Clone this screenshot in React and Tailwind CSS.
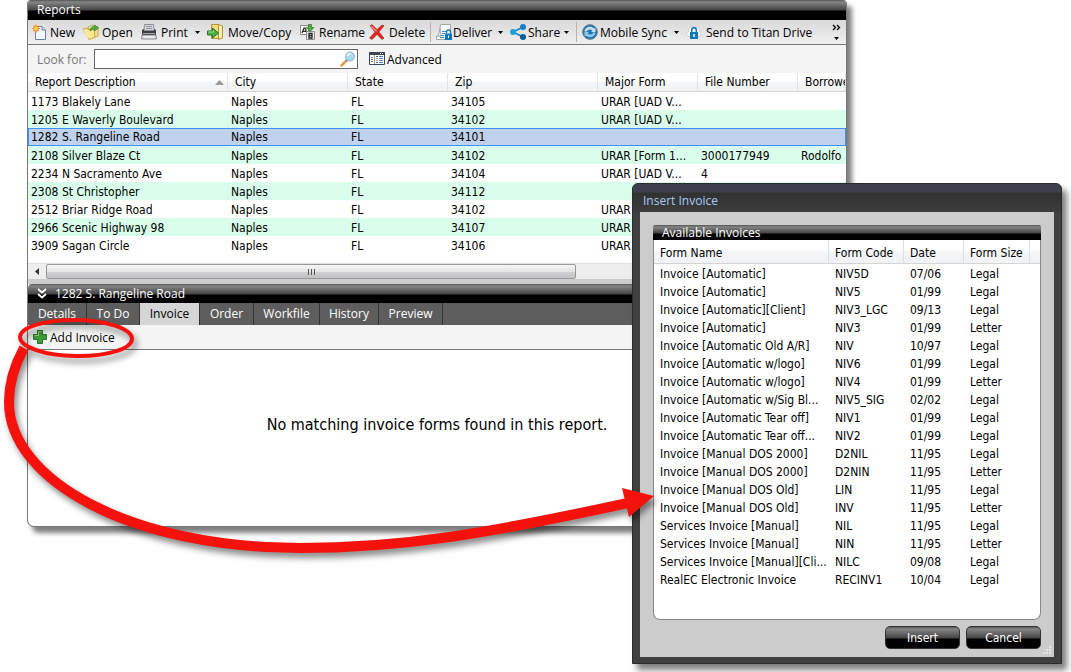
import React from 'react';
import clsx from 'clsx';

const reportColumns = [
  { label: 'Report Description', width: 'w-[200px]', sorted: true },
  { label: 'City', width: 'w-[120px]' },
  { label: 'State', width: 'w-[100px]' },
  { label: 'Zip', width: 'w-[150px]' },
  { label: 'Major Form', width: 'w-[100px]' },
  { label: 'File Number', width: 'w-[100px]' },
  { label: 'Borrower', width: 'w-auto' },
];

const reports = [
  ['1173 Blakely Lane', 'Naples', 'FL', '34105', 'URAR [UAD V...', '', ''],
  ['1205 E Waverly Boulevard', 'Naples', 'FL', '34102', 'URAR [UAD V...', '', ''],
  ['1282 S. Rangeline Road', 'Naples', 'FL', '34101', '', '', ''],
  ['2108 Silver Blaze Ct', 'Naples', 'FL', '34102', 'URAR [Form 1...', '3000177949', 'Rodolfo'],
  ['2234 N Sacramento Ave', 'Naples', 'FL', '34104', 'URAR [UAD V...', '4', ''],
  ['2308 St Christopher', 'Naples', 'FL', '34112', '', '', ''],
  ['2512 Briar Ridge Road', 'Naples', 'FL', '34102', 'URAR [UAD V...', '', ''],
  ['2966 Scenic Highway 98', 'Naples', 'FL', '34107', 'URAR [UAD V...', '', ''],
  ['3909 Sagan Circle', 'Naples', 'FL', '34106', 'URAR [UAD V...', '', ''],
];

const SELECTED = 2;

const invoiceColumns = [
  { label: 'Form Name', width: 'w-[175px]' },
  { label: 'Form Code', width: 'w-[75px]' },
  { label: 'Date', width: 'w-[60px]' },
  { label: 'Form Size', width: 'w-[66px]' },
];

const invoices = [
  ['Invoice [Automatic]', 'NIV5D', '07/06', 'Legal'],
  ['Invoice [Automatic]', 'NIV5', '01/99', 'Legal'],
  ['Invoice [Automatic][Client]', 'NIV3_LGC', '09/13', 'Legal'],
  ['Invoice [Automatic]', 'NIV3', '01/99', 'Letter'],
  ['Invoice [Automatic Old A/R]', 'NIV', '10/97', 'Legal'],
  ['Invoice [Automatic w/logo]', 'NIV6', '01/99', 'Legal'],
  ['Invoice [Automatic w/logo]', 'NIV4', '01/99', 'Letter'],
  ['Invoice [Automatic w/Sig Bl...', 'NIV5_SIG', '02/02', 'Legal'],
  ['Invoice [Automatic Tear off]', 'NIV1', '01/99', 'Legal'],
  ['Invoice [Automatic Tear off...', 'NIV2', '01/99', 'Legal'],
  ['Invoice [Manual DOS 2000]', 'D2NIL', '11/95', 'Legal'],
  ['Invoice [Manual DOS 2000]', 'D2NIN', '11/95', 'Letter'],
  ['Invoice [Manual DOS Old]', 'LIN', '11/95', 'Legal'],
  ['Invoice [Manual DOS Old]', 'INV', '11/95', 'Letter'],
  ['Services Invoice [Manual]', 'NIL', '11/95', 'Legal'],
  ['Services Invoice [Manual]', 'NIN', '11/95', 'Letter'],
  ['Services Invoice [Manual][Cli...', 'NILC', '09/08', 'Legal'],
  ['RealEC Electronic Invoice', 'RECINV1', '10/04', 'Legal'],
];

const tabs = [
  { label: 'Details', width: 'w-[59px]' },
  { label: 'To Do', width: 'w-[53px]' },
  { label: 'Invoice', width: 'w-[60px]', active: true },
  { label: 'Order', width: 'w-[54px]' },
  { label: 'Workfile', width: 'w-[66px]' },
  { label: 'History', width: 'w-[59px]' },
  { label: 'Preview', width: 'w-[64px]' },
];

/* Icons */
const Icon = ({ children }) => (
  <svg width="16" height="16" viewBox="0 0 16 16" className="shrink-0" aria-hidden="true">{children}</svg>
);

const NewIcon = () => (
  <Icon>
    <path d="M3.500 2.500H10L13.500 6V15.500H3.500Z" fill="#f4f8fe" stroke="#6482ad" />
    <path d="M10 2.500V6H13.500" fill="#c9dbf2" stroke="#6482ad" />
    <path d="M4 0l1 2 2-.6-.6 2L8.500 4.500l-2 1 .5 2-2-.6-1 2-1-2-2 .6.6-2L0 4.500l1.600-1L1 1.400l2 .6z" fill="#f28a2c" />
    <circle cx="4" cy="4.400" r="2" fill="#ffd04d" />
  </Icon>
);

const OpenIcon = () => (
  <Icon>
    <path d="M5 3l5-2 5 2v9l-6 2z" fill="#f7e08d" stroke="#b89430" strokeWidth=".7" />
    <path d="M0 5l4-1 1.500 1.500L11 5l1 8.500-6 2z" fill="#ffe88f" stroke="#c39a2b" strokeWidth=".8" />
    <path d="M7 7c0-3 2-4.500 4.500-4.500V1L15.500 4l-4 3V5.300C9.500 5.300 8.500 6 7 7z" fill="#4fae45" stroke="#287c2a" strokeWidth=".6" />
    <path d="M1 6l4 7.500" stroke="#fff7cc" />
  </Icon>
);

const PrintIcon = () => (
  <Icon>
    <path d="M3.500.5h9l.5 6H3z" fill="#d5d8dd" stroke="#8a8d92" />
    <path d="M5 2.500h6M5 4.500h6" stroke="#8f959d" />
    <path d="M1 6l2-1v2h10V5l2 1v5.500H1z" fill="#3c3e42" />
    <path d="M2 9.500h12" stroke="#a6a9ae" />
    <path d="M1 11h14l.5 4H.5z" fill="#d9dbde" stroke="#77797d" strokeWidth=".8" />
    <path d="M3 13h10" stroke="#fff" />
  </Icon>
);

const MoveIcon = () => (
  <Icon>
    <path d="M4.500.5h7v14h-7z" fill="#f5dc86" stroke="#b3923a" />
    <path d="M11.500.5l4 1.500v12l-4 1.500z" fill="#fff0ae" stroke="#b3923a" />
    <path d="M.5 7h5V4l6 5-6 5v-3h-5z" fill="#49b044" stroke="#26792a" />
    <path d="M1.500 8h5V6.500" stroke="#a7e08f" fill="none" />
  </Icon>
);

const RenameIcon = () => (
  <Icon>
    <path d="M.5 1.500h8v9h-8z" fill="#fff" stroke="#8d8d8d" />
    <path d="M2 9l2-5h1l2 5M3 7.300h3" stroke="#222" fill="none" strokeWidth="1.200" />
    <path d="M6.500 7.500h8v8h-8z" fill="#e9e9e9" stroke="#8d8d8d" />
    <path d="M9 9.500v4.500h3V9.500zM9 11.700h3" stroke="#222" fill="none" strokeWidth="1.300" />
    <path d="M8.500.5h3v3h2.500l-4 4-4-4h2.500z" fill="#54a93e" stroke="#2b7426" strokeWidth=".7" />
  </Icon>
);

const DeleteIcon = () => (
  <Icon>
    <path d="M1 2l2-1.500 5 5L13 1l2 .7-5 6.300 5 6-2 1.500-5-5-5 5-2.500-1.500L6 8z" fill="#dd2626" stroke="#a51212" strokeWidth=".5" />
    <path d="M2 2.200l5.500 5" stroke="#f59a92" strokeWidth="1.200" />
  </Icon>
);

const DeliverIcon = () => (
  <Icon>
    <path d="M4.500.5h10v15h-14V12H2.500z" fill="#fafafa" stroke="#a5a5a5" />
    <path d="M.5 12l4 .5V4" stroke="#b5b5b5" fill="none" />
    <path d="M6 7.500h4M6 9.500h3M5 11.500h3M4 13.500h4" stroke="#2b8fd0" />
    <path d="M9 9.500h7V16H9z" fill="#0d79bd" />
    <path d="M10.500 9.500V8a2 2 0 0 1 4 0v1.500" fill="none" stroke="#0d79bd" strokeWidth="1.300" />
    <path d="M12.500 11.500v2.500" stroke="#fff" />
  </Icon>
);

const ShareIcon = () => (
  <Icon>
    <path d="M13 3L3 8l10 5" stroke="#1580c8" strokeWidth="1.600" fill="none" />
    <circle cx="13" cy="3" r="3" fill="#1580c8" />
    <circle cx="3" cy="8" r="3" fill="#1ba0e0" />
    <circle cx="13" cy="13" r="3" fill="#0a5c9d" />
  </Icon>
);

const SyncIcon = () => (
  <Icon>
    <circle cx="8" cy="8" r="7.300" fill="#2573ac" stroke="#5d7689" />
    <path d="M2.500 7.500C3 2.500 9.500 1.500 12 4.500l1.500-.8V8H9l1.500-1.500C8.500 4.800 5.500 5 5 7.500z" fill="#c4e4f6" />
    <path d="M13.500 8.500c-.5 5-7 6-9.500 3l-1.500.8V8H7L5.500 9.500c2 1.700 5 1.500 5.500-1z" fill="#8fcbee" />
  </Icon>
);

const CloudLockIcon = () => (
  <Icon>
    <path d="M3 12.500C0 12-.3 8.500 2.500 7.500 2 3 6.500 1 9 3.500c3-.8 4.500 1.500 4.300 4C16 8.500 16 12 13 12.500z" fill="#fff" stroke="#c9cdd2" />
    <path d="M4 8h8v7H4z" fill="#0d79bd" />
    <path d="M5.700 8V6a2.300 2.300 0 0 1 4.600 0v2" fill="none" stroke="#0d79bd" strokeWidth="1.600" />
    <path d="M8 10v3" stroke="#fff" strokeWidth="1.500" />
  </Icon>
);

const MagnifierIcon = () => (
  <Icon>
    <path d="M1.500 14.500l5-5" stroke="#e9994f" strokeWidth="2.500" strokeLinecap="round" />
    <path d="M6 10l1.500-1.500" stroke="#7b8791" strokeWidth="2" />
    <circle cx="10" cy="5.500" r="4.500" fill="#a9dbf7" stroke="#8fb3cd" />
    <path d="M7.500 5c.3-1.600 1.500-2.300 3-2.300" stroke="#fff" fill="none" strokeWidth="1.300" />
  </Icon>
);

const AdvancedIcon = () => (
  <Icon>
    <path d="M.5 1.500h15v12H.5z" fill="#fff" stroke="#3c4654" />
    <path d="M0 1h16v3H0z" fill="#3c4654" />
    <path d="M11 2.500h1M13 2.500h1" stroke="#fff" />
    <path d="M5.500 4v9" stroke="#9aa3ae" />
    <path d="M2 6.500h2M2 8.500h2M2 10.500h2" stroke="#6a7482" />
    <path d="M7 5.500h2M7 11.500h2" stroke="#3b5ea5" />
    <path d="M7 7.500h2M7 9.500h2" stroke="#d98f2b" />
    <path d="M10 5.500h4M10 7.500h4M10 9.500h4M10 11.500h4" stroke="#5a7fc0" />
  </Icon>
);

const PlusIcon = () => (
  <Icon>
    <path d="M5.500 1.500h5v4h4v5h-4v4h-5v-4h-4v-5h4z" fill="#3f9d3a" stroke="#26772a" />
    <path d="M6.500 2.500h3M2.500 6.500h4v-4" stroke="#93d57f" fill="none" />
  </Icon>
);

const Caret = ({ className }) => (
  <svg width="5" height="3" viewBox="0 0 5 3" className={clsx('shrink-0', className)} aria-hidden="true">
    <path d="M0 0h5L2.500 3z" fill="#000" />
  </svg>
);

const ToolButton = ({ icon: IconEl, label, width, gap = 'gap-[2px]', menu }) => (
  <button type="button" className={clsx('flex h-full shrink-0 items-center whitespace-nowrap', width, gap)}>
    <IconEl />
    <span className="pt-[2px]">{label}</span>
    {menu && <Caret className="mr-[7px] ml-auto" />}
  </button>
);

const Separator = () => <div className="mr-[5px] h-5 w-px shrink-0 bg-[#b5b5ac]" />;

const barGradient = 'bg-[linear-gradient(#555_0,#858585_2px,#444_10px,#000_11px)]';
const smallBarGradient = 'bg-[linear-gradient(#555_0,#858585_2px,#444_8px,#000_9px)]';
const headGradient = 'bg-[linear-gradient(#fff_0,#fff_40%,#f4f5f7_50%,#f1f2f4_100%)]';

const Toolbar = () => (
  <div className="flex h-[25px] items-center border-b border-[#777] bg-[linear-gradient(#d9d9d9,#f0f0f0)] pl-[4px] font-['Open_Sans','Noto_Sans',sans-serif]">
    <ToolButton icon={NewIcon} label="New" width="w-[51px]" />
    <ToolButton icon={OpenIcon} label="Open" width="w-[58px]" gap="gap-[3px]" />
    <ToolButton icon={PrintIcon} label="Print" width="w-[66px]" gap="gap-[4px]" menu />
    <ToolButton icon={MoveIcon} label="Move/Copy" width="w-[93px]" gap="gap-[5px]" />
    <ToolButton icon={RenameIcon} label="Rename" width="w-[69px]" gap="gap-[3px]" />
    <ToolButton icon={DeleteIcon} label="Delete" width="w-[61px]" gap="gap-[4px]" />
    <Separator />
    <ToolButton icon={DeliverIcon} label="Deliver" width="w-[74px]" gap="gap-[1px]" menu />
    <ToolButton icon={ShareIcon} label="Share" width="w-[66px]" menu />
    <Separator />
    <ToolButton icon={SyncIcon} label="Mobile Sync" width="w-[104px]" menu />
    <ToolButton icon={CloudLockIcon} label="Send to Titan Drive" width="w-[130px]" gap="gap-[4px]" />
    <button type="button" aria-label="More tools" className="mr-[5px] ml-auto flex flex-col items-center gap-[6px]">
      <svg width="9" height="7" viewBox="0 0 9 7" aria-hidden="true">
        <path d="M1 1l2.500 2.500L1 6M5 1l2.500 2.500L5 6" fill="none" stroke="#000" strokeWidth="1.400" />
      </svg>
      <Caret />
    </button>
  </div>
);

const ReportTable = () => (
  <div className="overflow-hidden bg-white pb-[9px]">
    <table className="w-full table-fixed border-separate border-spacing-0 text-left whitespace-nowrap">
      <thead>
        <tr className={headGradient}>
          {reportColumns.map((c) => (
            <th key={c.label} scope="col" className={clsx('h-[19px] overflow-hidden border-r border-b border-r-[#e0e3e7] border-b-[#d5d5d5] p-0 pl-[7px] leading-[18px] font-normal', c.width)}>
              <div className="flex items-center justify-between pr-[3px]">
                {c.label}
                {c.sorted && (
                  <svg width="9" height="5" viewBox="0 0 9 5" aria-hidden="true"><path d="M0 5L4.500 0 9 5z" fill="#999" /></svg>
                )}
              </div>
            </th>
          ))}
        </tr>
      </thead>
      <tbody>
        {reports.map((row, i) => (
          <tr key={row[0]} className={clsx(i === SELECTED ? 'bg-[#c1d2ee]' : i % 2 ? 'bg-[#d9ffec]' : 'bg-white')}>
            {row.map((cell, j) => (
              <td
                key={j}
                className={clsx(
                  'h-[18px] overflow-hidden p-0 leading-[16px]',
                  i === SELECTED
                    ? 'border-y border-[#3c93ff] pl-[3px] first:border-l first:pl-[2px] last:border-r'
                    : 'pt-[2px] pl-[3px]'
                )}
              >
                {cell}
              </td>
            ))}
          </tr>
        ))}
      </tbody>
    </table>
  </div>
);

const ScrollBar = () => (
  <div className="flex h-[16px] items-center border-t border-[#e0e0e0] bg-[#eee]">
    <button type="button" aria-label="Scroll left" className="flex w-[18px] justify-center">
      <svg width="4" height="7" viewBox="0 0 4 7" aria-hidden="true"><path d="M4 0v7L0 3.500z" fill="#333" /></svg>
    </button>
    <div className="flex h-[15px] w-[530px] items-center justify-center gap-[2px] rounded-[2px] border border-[#989898] bg-[linear-gradient(#f5f5f5_0,#e4e4e5_50%,#d0d0d2_55%,#c2c2c5_100%)]">
      <span className="h-[6px] w-px bg-[#555]" />
      <span className="h-[6px] w-px bg-[#555]" />
      <span className="h-[6px] w-px bg-[#555]" />
    </div>
  </div>
);

const ReportsWindow = () => (
  <main className="mr-[224px] ml-[27px] overflow-hidden rounded-t-[4px] rounded-b-[7px] border border-t-0 border-[#777] bg-white shadow-[5px_6px_5px_rgba(0,0,0,0.5)]">
    <h1 className={clsx('h-[20px] pl-[9px] font-["Open_Sans","Noto_Sans",sans-serif] leading-[20px] text-white', barGradient)}>Reports</h1>
    <Toolbar />
    <div className="flex h-[28px] items-center bg-[#f4f4f4] pl-[9px] font-['Open_Sans','Noto_Sans',sans-serif]">
      <label htmlFor="look-for" className="w-[57px] pt-[2px] text-[#777]">Look for:</label>
      <div className="flex h-[20px] w-[264px] items-center border border-[#666] bg-white pr-px">
        <input id="look-for" type="text" className="min-w-0 flex-1 px-1 outline-none" />
        <MagnifierIcon />
      </div>
      <button type="button" className="ml-[11px] flex items-center gap-[2px]">
        <AdvancedIcon />
        <span className="pt-[2px]">Advanced</span>
      </button>
    </div>
    <ReportTable />
    <ScrollBar />
    <div className="h-[5px] bg-[#ccc]" />
    <h2 className={clsx('flex h-[19px] items-center gap-[8px] rounded-tl-[4px] pl-[9px] font-["Open_Sans","Noto_Sans",sans-serif] text-white', barGradient)}>
      <svg width="10" height="11" viewBox="0 0 10 11" aria-hidden="true">
        <path d="M1 1l4 3.500L9 1M1 6l4 3.500L9 6" fill="none" stroke="#fff" strokeWidth="1.800" />
      </svg>
      1282 S. Rangeline Road
    </h2>
    <div role="tablist" className="flex h-[22px] bg-[#5d5d5d] font-['Open_Sans','Noto_Sans',sans-serif] text-white">
      {tabs.map((t) => (
        <button
          key={t.label}
          type="button"
          role="tab"
          aria-selected={!!t.active}
          className={clsx('shrink-0 border-r border-[#333]', t.width, t.active && 'bg-[#d6d6d6] text-black')}
        >
          {t.label}
        </button>
      ))}
    </div>
    <div className="flex h-[25px] items-center border-b border-[#777] bg-[#f4f4f4] pl-[4px] font-['Open_Sans','Noto_Sans',sans-serif]">
      <button type="button" className="flex items-center gap-[2px]">
        <PlusIcon />
        <span className="pt-[2px]">Add Invoice</span>
      </button>
    </div>
    <p className="pt-[62px] pb-[89px] text-center text-[16px] leading-[25px]">No matching invoice forms found in this report.</p>
  </main>
);

const dialogButton = 'h-[23px] w-[75px] rounded-[5px] border border-[#333] bg-[linear-gradient(#555_0,#858585_2px,#444_11px,#000_12px)] text-white';

const InsertInvoiceDialog = () => (
  <section
    role="dialog"
    aria-labelledby="dialog-title"
    className="absolute top-[183px] right-[9px] w-[430px] rounded-t-[6px] border border-[#2b2b2b] bg-[#404040] px-[7px] pb-[6px] shadow-[5px_6px_6px_rgba(0,0,0,0.5)]"
  >
    <h2 id="dialog-title" className="-mx-[7px] h-[28px] rounded-t-[5px] bg-[linear-gradient(#3d404c_0,#3d404c_8px,#303231_9px,#3b3c3b_100%)] pt-[8px] pl-[10px] font-['Open_Sans','Noto_Sans',sans-serif] text-[#a9c9f5]">
      Insert Invoice
    </h2>
    <div className="bg-[#ccc] px-[13px] pt-[13px] pb-[8px]">
      <h3 className={clsx('h-[15px] rounded-t-[2px] pl-[9px] font-["Open_Sans","Noto_Sans",sans-serif] leading-[16px] text-white', smallBarGradient)}>
        Available Invoices
      </h3>
      <div className="overflow-hidden rounded-b-[7px] border border-t-0 border-[#888] bg-white pb-[31px]">
        <table className="w-full table-fixed border-separate border-spacing-0 text-left whitespace-nowrap">
          <thead>
            <tr className={headGradient}>
              {invoiceColumns.map((c) => (
                <th key={c.label} scope="col" className={clsx('h-[24px] border-r border-b border-r-[#dcdfe3] border-b-[#d5d5d5] p-0 pt-[2px] pl-[6px] font-normal', c.width)}>
                  {c.label}
                </th>
              ))}
              <td className="border-b border-[#d5d5d5]" />
            </tr>
          </thead>
          <tbody>
            {invoices.map((row, i) => (
              <tr key={i}>
                {row.map((cell, j) => (
                  <td key={j} className="h-[18px] p-0 pt-[2px] pl-[6px] leading-[16px]">{cell}</td>
                ))}
                <td />
              </tr>
            ))}
          </tbody>
        </table>
      </div>
      <div className="mt-[6px] flex justify-end gap-[6px]">
        <button type="button" className={dialogButton}>Insert</button>
        <button type="button" className={dialogButton}>Cancel</button>
      </div>
    </div>
    {/* Resize grip */}
    <svg width="9" height="9" viewBox="0 0 9 9" className="absolute right-[9px] bottom-[8px]" aria-hidden="true">
      <path d="M6 0h2v2H6zM3 3h2v2H3zM6 3h2v2H6zM0 6h2v2H0zM3 6h2v2H3zM6 6h2v2H6z" fill="#e6e6e6" />
    </svg>
  </section>
);

/* Red ring and arrow leading from Add Invoice to the dialog */
const Callout = () => (
  <svg width="670" height="570" viewBox="0 0 670 570" className="pointer-events-none absolute top-0 left-0 drop-shadow-[3px_5px_3px_rgba(0,0,0,0.45)]" aria-hidden="true">
    <ellipse cx="76" cy="338" rx="56" ry="18" fill="none" stroke="#f5120d" strokeWidth="4" transform="rotate(1 76 338)" />
    <path d="M24 348C14 366 9 383 9 402C9 480 130 548 300 548C400 548 480 535 628 503" fill="none" stroke="#f5120d" strokeWidth="10" />
    <path d="M622 488L654 496L629 517Z" fill="#f5120d" />
  </svg>
);

const App = () => (
  <div className="relative min-h-screen overflow-hidden bg-white font-['DejaVu_Sans_Condensed','DejaVu_Sans',sans-serif] text-[12px] leading-[18px] text-black">
    <ReportsWindow />
    <InsertInvoiceDialog />
    <Callout />
  </div>
);

export default App;
